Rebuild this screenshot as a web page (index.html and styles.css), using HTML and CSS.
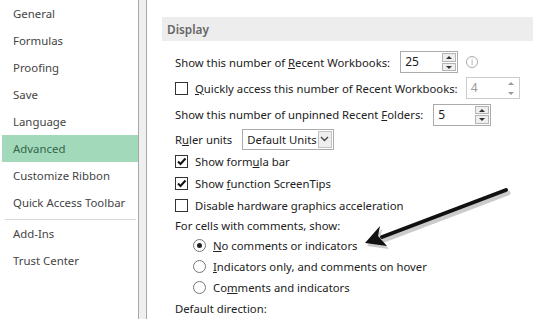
FILE: index.html
```html
<!DOCTYPE html>
<html lang="en">
  <head>
    <meta charset="utf-8">
    <title>Excel Options - Advanced</title>
    <link rel="stylesheet" href="styles.css">
  </head>
  <body>
    <div class="window">
      <ul class="nav">
        <li>General</li>
        <li>Formulas</li>
        <li>Proofing</li>
        <li>Save</li>
        <li>Language</li>
        <li class="active">Advanced</li>
        <li>Customize Ribbon</li>
        <li>Quick Access Toolbar</li>
        <li class="sep"></li>
        <li>Add-Ins</li>
        <li>Trust Center</li>
      </ul>
      <div class="gutter"></div>

      <div class="main">
        <div class="row cut">
          <span class="check"></span>
          <span>Properties follow chart data point for current workbook</span>
        </div>

        <div class="section">Display</div>

        <div class="row r1">
          <span>Show this number of <u>R</u>ecent Workbooks:</span>
          <span class="spin"><span class="val">25</span><span class="arrows"><i class="up"></i><i class="down"></i></span></span>
          <span class="info">i</span>
        </div>
        <div class="row r2">
          <span class="check"></span>
          <span><u>Q</u>uickly access this number of Recent Workbooks:</span>
          <span class="spin off"><span class="val">4</span><span class="arrows"><i class="up"></i><i class="down"></i></span></span>
        </div>
        <div class="row r3">
          <span>Show this number of unpinned Recent <u>F</u>olders:</span>
          <span class="spin"><span class="val">5</span><span class="arrows"><i class="up"></i><i class="down"></i></span></span>
        </div>
        <div class="row r4">
          <span>R<u>u</u>ler units</span>
          <span class="select"><span class="val">Default Units</span><span class="drop"><svg width="9" height="6" viewBox="0 0 9 6"><path d="M1 1l3.5 3.5L8 1" fill="none" stroke="#444" stroke-width="1.4"/></svg></span></span>
        </div>
        <div class="row r5">
          <span class="check on"><svg width="11" height="11" viewBox="0 0 11 11"><path d="M2 5.5l2.5 2.5L9.5 2.5" fill="none" stroke="#111" stroke-width="2"/></svg></span>
          <span>Show form<u>u</u>la bar</span>
        </div>
        <div class="row r6">
          <span class="check on"><svg width="11" height="11" viewBox="0 0 11 11"><path d="M2 5.5l2.5 2.5L9.5 2.5" fill="none" stroke="#111" stroke-width="2"/></svg></span>
          <span>Show <u>f</u>unction ScreenTips</span>
        </div>
        <div class="row r7">
          <span class="check"></span>
          <span>Disable hardware graphics acceleration</span>
        </div>
        <div class="row r8">
          <span>For cells with comments, show:</span>
        </div>
        <div class="row r9 opt">
          <span class="radio on"></span>
          <span><u>N</u>o comments or indicators</span>
        </div>
        <div class="row r10 opt">
          <span class="radio"></span>
          <span><u>I</u>ndicators only, and comments on hover</span>
        </div>
        <div class="row r11 opt">
          <span class="radio"></span>
          <span>Co<u>m</u>ments and indicators</span>
        </div>
        <div class="row r12">
          <span>Default direction:</span>
        </div>
      </div>
    </div>

    <svg class="arrow" width="533" height="319" viewBox="0 0 533 319">
      <g transform="translate(2,3)" opacity="0.3">
        <path d="M506 190L382 237" stroke="#555" stroke-width="5" stroke-linecap="round"/>
        <path d="M365 243L380 226L378 236L387 246Z" fill="#555"/>
      </g>
      <path d="M506 190L382 237" stroke="#111" stroke-width="4" stroke-linecap="round"/>
      <path d="M365 243L380 226L378 236L387 246Z" fill="#111"/>
    </svg>
  </body>
</html>
```

FILE: styles.css
```css
html, body {
  margin: 0;
  padding: 0;
  background: #fff;
  overflow: hidden;
}
body {
  font-family: "Noto Sans", "Open Sans", sans-serif;
  font-size: 11.3px;
  color: #222;
}
.window {
  display: flex;
  width: 533px;
  height: 319px;
}
.nav {
  list-style: none;
  margin: 0;
  padding: 0;
  width: 138px;
  border-right: 1px solid #a8a8a8;
  flex-shrink: 0;
}
.nav li {
  height: 27px;
  line-height: 27px;
  padding-left: 11px;
  margin-left: 2px;
  color: #444;
  font-size: 11.4px;
  white-space: nowrap;
}
.nav li.active {
  background: #a3d9bb;
  color: #33664a;
}
.nav li.sep {
  height: 1px;
  line-height: 0;
  margin: 3px 2px 0 5px;
  padding: 0;
  background: #d8d8d8;
}
.gutter {
  width: 7px;
  background: #efefef;
  border-right: 1px solid #a8a8a8;
  flex-shrink: 0;
}
.main {
  flex: 1;
  padding-left: 15px;
  min-width: 0;
}
.row {
  display: flex;
  align-items: center;
  padding-left: 13px;
  white-space: nowrap;
  gap: 7px;
}
.row.cut {
  margin-top: -20px;
  height: 22px;
}
.section {
  margin-top: 15px;
  height: 24px;
  line-height: 24px;
  background: #ededed;
  color: #666;
  font-weight: 600;
  padding-left: 5px;
  font-size: 11.8px;
}
.r1 { margin-top: 8px; height: 26px; gap: 10px; }
.r2 { height: 26px; gap: 7px; }
.r2 .spin { margin-left: 1px; width: 54px; }
.r3 { height: 27px; gap: 10px; }
.r4 { height: 22px; gap: 10px; }
.r5, .r6, .r7 { height: 22px; }
.r8 { height: 19px; }
.r9, .r10, .r11 { height: 21px; }
.r12 { height: 21px; }
.opt { padding-left: 31px; }

.check {
  width: 11px;
  height: 11px;
  border: 1px solid #333;
  background: #fff;
  display: flex;
  align-items: center;
  justify-content: center;
  flex-shrink: 0;
}
.radio {
  width: 11px;
  height: 11px;
  border: 1px solid #777;
  border-radius: 50%;
  position: relative;
  flex-shrink: 0;
}
.radio.on::after {
  content: "";
  position: absolute;
  left: 3px;
  top: 3px;
  width: 5px;
  height: 5px;
  border-radius: 50%;
  background: #222;
}

.spin {
  display: flex;
  width: 58px;
  height: 22px;
  box-sizing: border-box;
  border: 1px solid #ababab;
  background: #fff;
}
.spin .val {
  flex: 1;
  padding-left: 4px;
  line-height: 20px;
  font-size: 12px;
}
.spin .arrows {
  width: 14px;
  display: flex;
  flex-direction: column;
  padding: 1px;
  gap: 1px;
}
.spin .arrows i {
  flex: 1;
  border: 1px solid #b5b5b5;
  background: #efefef;
  position: relative;
}
.spin .arrows i::after {
  content: "";
  position: absolute;
  left: 3px;
  border-left: 3px solid transparent;
  border-right: 3px solid transparent;
}
.spin .arrows .up::after {
  top: 2px;
  border-bottom: 3px solid #333;
}
.spin .arrows .down::after {
  top: 2px;
  border-top: 3px solid #333;
}
.spin.off {
  border-color: #cdcdcd;
}
.spin.off .val {
  color: #9a9a9a;
}
.spin.off .arrows i {
  border-color: transparent;
  background: #fff;
}
.spin.off .arrows i::after {
  border-top-color: #999;
  border-bottom-color: #999;
}
.info {
  width: 10px;
  height: 10px;
  border: 1px solid #aaa;
  border-radius: 50%;
  color: #999;
  font-size: 8px;
  line-height: 10px;
  text-align: center;
  margin-left: -2px;
}

.select {
  display: flex;
  width: 92px;
  height: 21px;
  box-sizing: border-box;
  border: 1px solid #ababab;
  background: #fff;
}
.select .val {
  flex: 1;
  padding-left: 4px;
  line-height: 19px;
}
.select .drop {
  width: 16px;
  margin: 1px;
  border: 1px solid #c3c3c3;
  background: #eeeeee;
  display: flex;
  align-items: center;
  justify-content: center;
}

.arrow {
  position: absolute;
  left: 0;
  top: 0;
  pointer-events: none;
}
```
